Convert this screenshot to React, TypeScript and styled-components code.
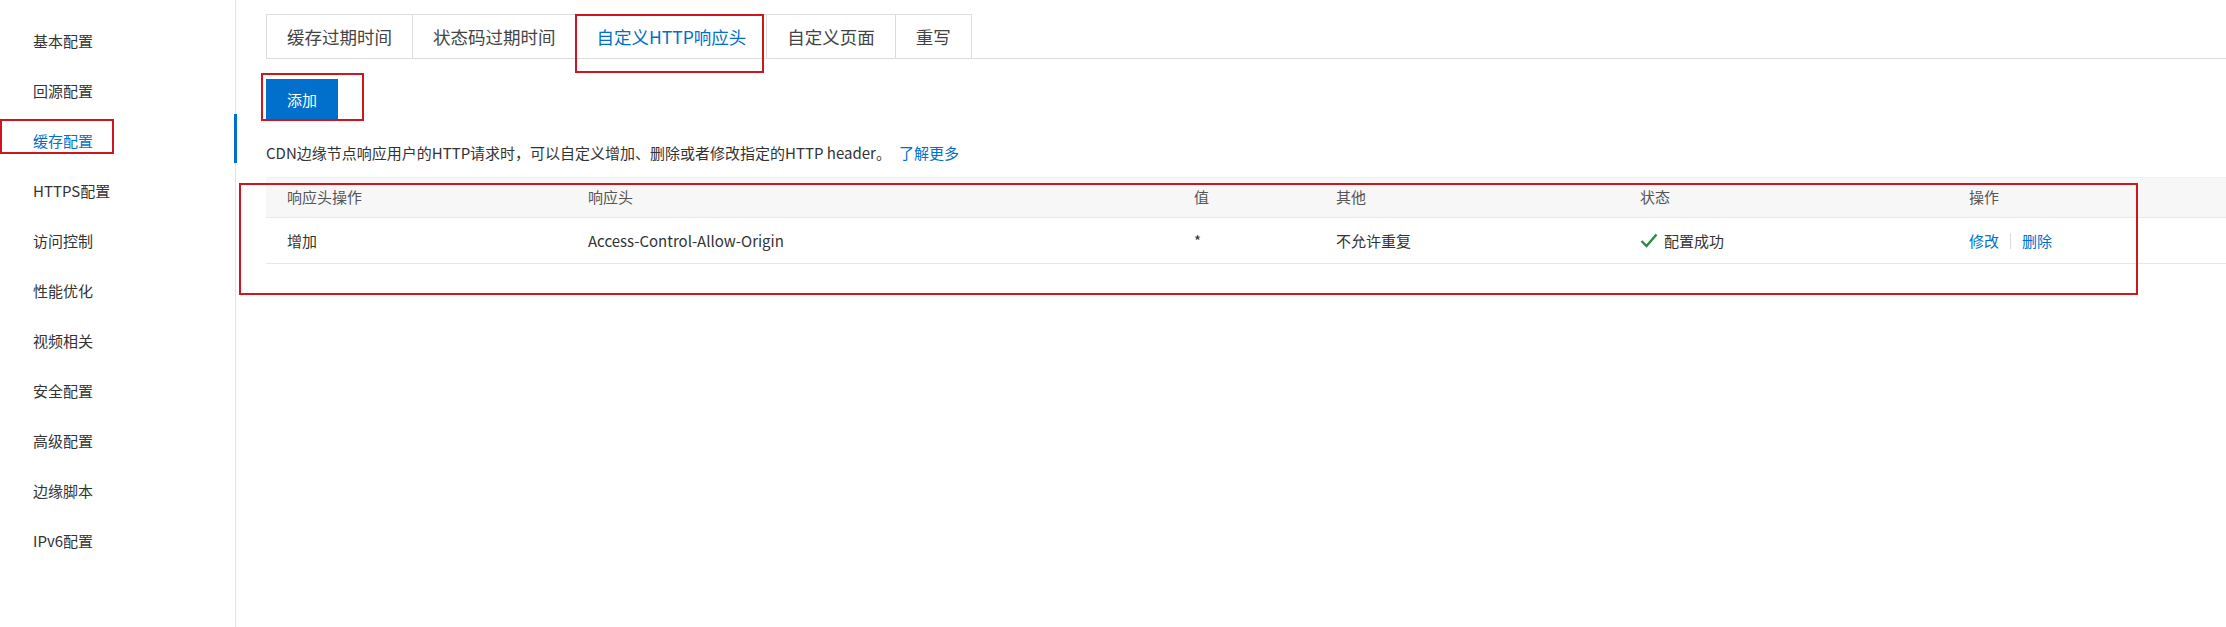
import React from 'react';
import styled, { createGlobalStyle } from 'styled-components';

const GlobalStyle = createGlobalStyle`
  html, body {
    margin: 0;
    padding: 0;
    background: #fff;
    font-family: "Noto Sans CJK SC", "Noto Sans", sans-serif;
    color: #333;
  }
`;

const Page = styled.div`
  position: relative;
  display: flex;
  min-height: 100vh;
`;

const Sidebar = styled.div`
  width: 236px;
  flex-shrink: 0;
  border-right: 1px solid #e3e3e3;
  padding-top: 14px;
  box-sizing: border-box;
`;

const NavItem = styled.div<{ $active?: boolean }>`
  position: relative;
  height: 50px;
  display: flex;
  align-items: center;
  padding: 2px 0 0 33px;
  box-sizing: border-box;
  font-size: 15px;
  color: ${(p) => (p.$active ? '#0070cc' : '#333')};
  cursor: pointer;

  &::after {
    content: '';
    display: ${(p) => (p.$active ? 'block' : 'none')};
    position: absolute;
    right: -2px;
    top: 0;
    width: 3px;
    height: 49px;
    background: #0070cc;
  }
`;

const Main = styled.div`
  flex: 1;
  padding: 14px 0 0 30px;
`;

const TabBar = styled.div`
  display: flex;
  border-bottom: 1px solid #dcdcdc;
`;

const Tab = styled.div<{ $active?: boolean }>`
  height: 43px;
  padding: 0 20px;
  display: flex;
  align-items: center;
  font-size: 17.5px;
  color: ${(p) => (p.$active ? '#0070cc' : '#444')};
  border: 1px solid #dcdcdc;
  border-bottom: none;
  border-right: none;
  cursor: pointer;

  &:last-child {
    border-right: 1px solid #dcdcdc;
  }
`;

const AddButton = styled.button`
  margin-top: 20px;
  width: 72px;
  height: 40px;
  border: none;
  background: #0070cc;
  color: #fff;
  font-family: inherit;
  font-size: 15px;
  cursor: pointer;
`;

const Desc = styled.div`
  margin-top: 24px;
  font-size: 15px;
  line-height: 20px;
  color: #333;
`;

const MoreLink = styled.a`
  margin-left: 8px;
  color: #0070cc;
  text-decoration: none;
  cursor: pointer;
`;

const Table = styled.div`
  margin-top: 14px;
`;

const cols = '301px 606px 142px 304px 329px 1fr';

const HeadRow = styled.div`
  display: grid;
  grid-template-columns: ${cols};
  height: 41px;
  padding-bottom: 2px;
  background: #f7f7f7;
  border-top: 1px solid #f0f0f0;
  border-bottom: 1px solid #e8e8e8;
  box-sizing: border-box;
  align-items: center;
`;

const BodyRow = styled.div`
  display: grid;
  grid-template-columns: ${cols};
  height: 46px;
  border-bottom: 1px solid #e8e8e8;
  box-sizing: border-box;
  align-items: center;
`;

const Cell = styled.div<{ $head?: boolean }>`
  padding-left: 21px;
  font-size: 15px;
  color: ${(p) => (p.$head ? '#555' : '#333')};
  display: flex;
  align-items: center;
`;

const StatusText = styled.span`
  margin-left: 6px;
`;

const ActionLink = styled.a`
  color: #0070cc;
  cursor: pointer;
`;

const ActionDivider = styled.span`
  width: 1px;
  height: 16px;
  background: #ddd;
  margin: 0 11px;
`;

const Annotation = styled.div<{ $x: number; $y: number; $w: number; $h: number }>`
  position: absolute;
  left: ${(p) => p.$x}px;
  top: ${(p) => p.$y}px;
  width: ${(p) => p.$w}px;
  height: ${(p) => p.$h}px;
  border: 2px solid #cc1720;
  box-sizing: border-box;
  pointer-events: none;
`;

const navItems = [
  '基本配置',
  '回源配置',
  '缓存配置',
  'HTTPS配置',
  '访问控制',
  '性能优化',
  '视频相关',
  '安全配置',
  '高级配置',
  '边缘脚本',
  'IPv6配置',
];

const tabs = ['缓存过期时间', '状态码过期时间', '自定义HTTP响应头', '自定义页面', '重写'];

const CheckIcon = () => (
  <svg width="18" height="15" viewBox="0 0 18 15">
    <path d="M1.5 8 L6.5 13 L16.5 1.5" fill="none" stroke="#2a8c3c" strokeWidth="2.4" />
  </svg>
);

const App = () => {
  return (
    <>
      <GlobalStyle />
      <Page>
        <Sidebar>
          {navItems.map((item) => (
            <NavItem key={item} $active={item === '缓存配置'}>
              {item}
            </NavItem>
          ))}
        </Sidebar>
        <Main>
          <TabBar>
            {tabs.map((t) => (
              <Tab key={t} $active={t === '自定义HTTP响应头'}>
                {t}
              </Tab>
            ))}
          </TabBar>
          <AddButton>添加</AddButton>
          <Desc>
            CDN边缘节点响应用户的HTTP请求时，可以自定义增加、删除或者修改指定的HTTP header。
            <MoreLink>了解更多</MoreLink>
          </Desc>
          <Table>
            <HeadRow>
              <Cell $head>响应头操作</Cell>
              <Cell $head>响应头</Cell>
              <Cell $head>值</Cell>
              <Cell $head>其他</Cell>
              <Cell $head>状态</Cell>
              <Cell $head>操作</Cell>
            </HeadRow>
            <BodyRow>
              <Cell>增加</Cell>
              <Cell>Access-Control-Allow-Origin</Cell>
              <Cell>*</Cell>
              <Cell>不允许重复</Cell>
              <Cell>
                <CheckIcon />
                <StatusText>配置成功</StatusText>
              </Cell>
              <Cell>
                <ActionLink>修改</ActionLink>
                <ActionDivider />
                <ActionLink>删除</ActionLink>
              </Cell>
            </BodyRow>
          </Table>
        </Main>
        {/* red review marks from the screenshot */}
        <Annotation $x={0} $y={119} $w={114} $h={35} />
        <Annotation $x={575} $y={14} $w={189} $h={59} />
        <Annotation $x={261} $y={73} $w={103} $h={48} />
        <Annotation $x={239} $y={183} $w={1899} $h={112} />
      </Page>
    </>
  );
};

export default App;
